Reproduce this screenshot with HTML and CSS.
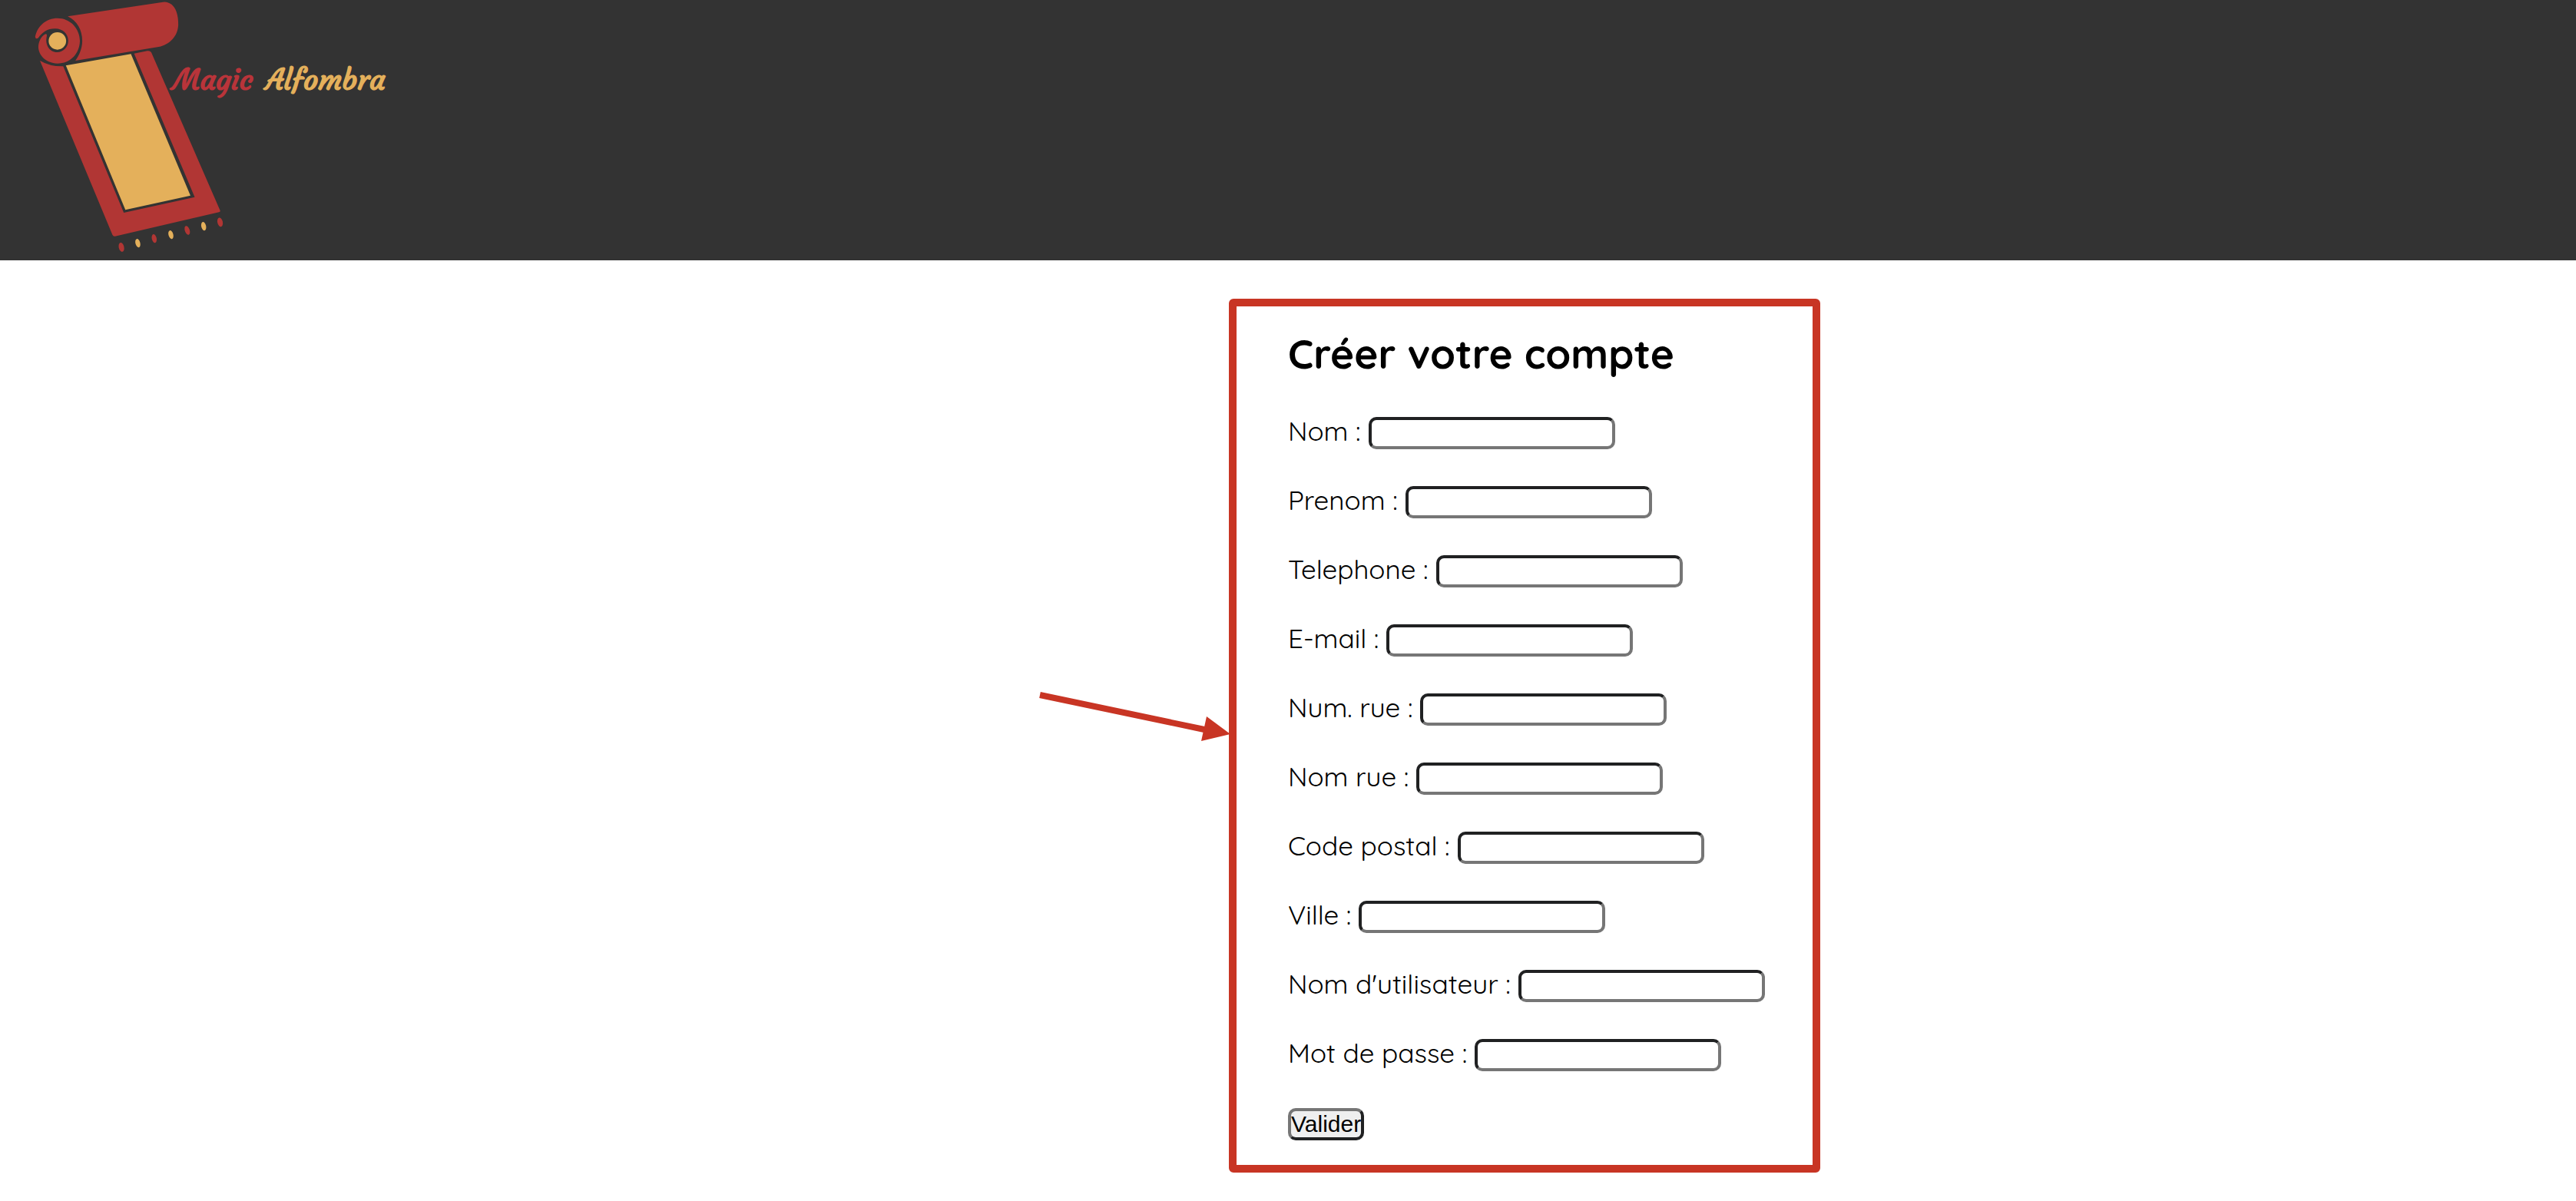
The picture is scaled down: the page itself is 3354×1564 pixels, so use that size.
FILE: index.html
```html
<!DOCTYPE html>
<html lang="fr">
<head>
<meta charset="utf-8">
<meta name="viewport" content="width=device-width, initial-scale=1">
<title>Magic Alfombra</title>
<link rel="stylesheet" href="styles.css">
</head>
<body>
<header class="site-header">
  <svg class="logo" viewBox="0 0 540 339" role="img" aria-label="Magic Alfombra">
    <g transform="scale(.3444 .3333)">
      <g class="red">
        <path d="M256 64L616 8Q629 5 641 13C666 25 675 62 674 98C672 140 643 174 600 183L285 237C299 217 311 190 311 160C311 118 292 82 256 64Z"/>
        <path d="M133 143C142 101 174 71 217 71C267 71 301 112 302 159C301 210 266 248 217 248C172 247 144 214 145 181C147 157 160 137 173 133C178 133 178 138 176 146C171 172 185 204 216 204C240 203 258 184 258 158C257 131 236 112 210 112C180 111 161 125 145 148Q135 156 133 143Z"/>
        <path d="M151 237Q188 260 239 259L468 831L736 770L507 209L557 199Q567 197 572 205L832 822Q834 827 828 829L435 923Q428 924 425 917Z"/>
        <ellipse cx="459" cy="966" rx="10" ry="18" transform="rotate(-12 459 966)"/>
        <ellipse cx="583" cy="932" rx="9" ry="17" transform="rotate(-12 583 932)"/>
        <ellipse cx="708" cy="900" rx="9" ry="18" transform="rotate(-18 708 900)"/>
        <ellipse cx="832" cy="868" rx="10" ry="18" transform="rotate(-12 832 868)"/>
      </g>
      <g class="gold">
        <ellipse cx="217" cy="160" rx="33" ry="34"/>
        <path d="M249 256L495 211L720 764L474 820Z"/>
        <ellipse cx="521" cy="950" rx="9" ry="17" transform="rotate(-14 521 950)"/>
        <ellipse cx="646" cy="917" rx="9" ry="17" transform="rotate(-14 646 917)"/>
        <ellipse cx="770" cy="884" rx="9" ry="17" transform="rotate(-12 770 884)"/>
      </g>
    </g>
    <text class="brand brand-red" x="225" y="117">Magic</text>
    <text class="brand gold" x="346" y="117">Alfombra</text>
  </svg>
</header>
<main class="content">
  <section class="panel">
    <svg class="arrow" viewBox="0 0 250 70" aria-hidden="true">
      <path d="M3 22L217 67" class="shaft"/>
      <path d="M220 50L251 73L213 82Z"/>
    </svg>
    <h1 class="title">Créer votre compte</h1>
    <form class="form">
      <div class="field"><label for="nom">Nom :</label><input id="nom" type="text"></div>
      <div class="field"><label for="prenom">Prenom :</label><input id="prenom" type="text"></div>
      <div class="field"><label for="telephone">Telephone :</label><input id="telephone" type="tel"></div>
      <div class="field"><label for="email">E-mail :</label><input id="email" type="email"></div>
      <div class="field"><label for="num-rue">Num. rue :</label><input id="num-rue" type="text"></div>
      <div class="field"><label for="nom-rue">Nom rue :</label><input id="nom-rue" type="text"></div>
      <div class="field"><label for="code-postal">Code postal :</label><input id="code-postal" type="text"></div>
      <div class="field"><label for="ville">Ville :</label><input id="ville" type="text"></div>
      <div class="field"><label for="utilisateur">Nom d'utilisateur :</label><input id="utilisateur" type="text"></div>
      <div class="field"><label for="passe">Mot de passe :</label><input id="passe" type="password"></div>
      <button class="submit" type="submit">Valider</button>
    </form>
  </section>
</main>
</body>
</html>
```
FILE: styles.css
```css
* { box-sizing: border-box; }

body {
  margin: 0;
  background: #fff;
  color: #000;
  font-family: Quicksand, Lato, sans-serif;
  font-size: 35px;
}

.site-header { background: #333; }

.logo {
  display: block;
  width: 540px;
  height: 339px;
}

.red { fill: #b13634; }
.gold { fill: #e4b05b; }
.brand-red { fill: #b9343a; }

.brand {
  font-family: Courgette, Lato, cursive;
  font-size: 38px;
  font-weight: 700;
}

.content { padding: 50px 0 37px; }

.panel {
  position: relative;
  width: 770px;
  margin-left: calc(50% - 77px);
  padding: 26px 67px 32px;
  border: 10px solid #c83524;
  border-radius: 6px;
}

.arrow {
  position: absolute;
  top: 484px;
  left: -259px;
  width: 250px;
  height: 70px;
  overflow: visible;
  fill: #c83524;
}

.shaft {
  stroke: #c83524;
  stroke-width: 8px;
}

.title {
  margin: 0 0 48px;
  font-size: 53px;
  line-height: 70px;
  font-weight: 700;
}

.form {
  display: flex;
  flex-direction: column;
  align-items: flex-start;
  gap: 48px;
}

.field {
  display: flex;
  align-items: flex-start;
  gap: 10px;
  line-height: 36px;
  white-space: nowrap;
}

.field input {
  width: 321px;
  height: 42px;
  padding: 2px 4px;
  border: 4px solid;
  border-color: #202122 #767676 #767676 #202122;
  border-radius: 10px;
  background: #fff;
  font: 30px "Liberation Sans", sans-serif;
}

.submit {
  height: 42px;
  padding: 0;
  border: 4px solid;
  border-color: #767676 #202122 #202122 #767676;
  border-radius: 10px;
  background: #efefef;
  color: #000;
  font: 30px/34px "Liberation Sans", sans-serif;
}
```
